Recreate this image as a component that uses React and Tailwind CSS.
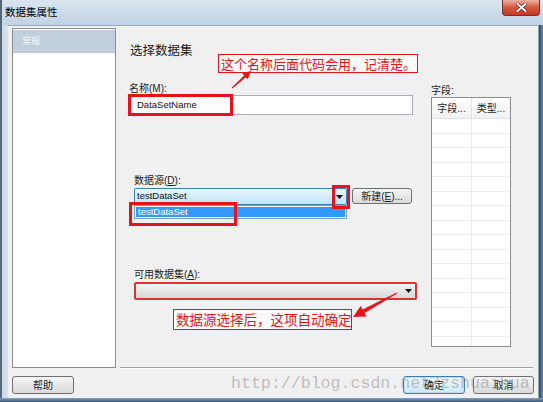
const rows = Array.from({ length: 16 })

function Arrow({ className = '' }) {
  return (
    <svg width="7" height="4" viewBox="0 0 7 4" className={className}>
      <path d="M0 0h7L3.5 4z" fill="#111" />
    </svg>
  )
}

export default function App() {
  return (
    <div className="relative w-[543px] h-[402px] overflow-hidden bg-[#c3d4e6] font-['Liberation_Sans','Noto_Sans_CJK_SC',sans-serif] text-[#1e1e1e]">
      {/* Title bar */}
      <div className="h-[25px] flex items-start justify-between bg-gradient-to-b from-[#d9e4ef] to-[#c0d2e5] border-l-2 border-[#56677a]">
        <span className="pl-[3px] pt-[6px] text-[10.5px] leading-[13px] text-black">数据集属性</span>
        <div className="mr-[3px] w-[38px] h-[16px] rounded-b-[4px] bg-gradient-to-b from-[#eab0a2] via-[#d4573f] to-[#c13a22] border border-t-0 border-[#7b3025] flex items-center justify-center">
          <svg width="11" height="9" viewBox="0 0 11 9">
            <path d="M1.5 1l8 7M9.5 1l-8 7" stroke="#5a1d14" strokeWidth="3.4" strokeLinecap="round" />
            <path d="M1.5 1l8 7M9.5 1l-8 7" stroke="#fff" strokeWidth="2" strokeLinecap="round" />
          </svg>
        </div>
      </div>

      {/* Body */}
      <div className="flex h-[373px]">
        <div className="w-[8px] bg-gradient-to-r from-[#cbd9e8] to-[#d5e1ee] border-l-2 border-[#56677a]" />

        <div className="w-[530px] bg-[#f0f0f0] border-t border-[#97a8ba] flex flex-col">
          <div className="flex h-[342px]">
            {/* Left nav */}
            <div className="ml-[4px] mt-[2px] w-[104px] h-[340px] border border-[#8d8d8d] bg-white">
              <div className="mt-px h-[23px] bg-[#c1cfdc] pl-[9px] flex items-center text-[9px] text-[#f4f7fa]">常规</div>
            </div>

            {/* Right content */}
            <div className="ml-[4px] w-[413px] h-[342px] border-b border-[#a0a0a0] shadow-[0_1px_0_#ffffff] pl-[9px]">
              <div className="mt-[16px] ml-px text-[12.5px] leading-[18px] text-[#1a1a1a]">选择数据集</div>

              <div className="flex">
                {/* Form */}
                <div className="w-[302px] flex flex-col">
                  <div className="mt-[22px] text-[10px] leading-[13px]">名称(M):</div>
                  <div className="w-[284px] h-[20px] border border-[#abadb3] bg-white pl-[7px] flex items-center text-[9.5px] text-[#111]">
                    DataSetName
                  </div>

                  <div className="mt-[59px] ml-[5px] text-[10px] leading-[13px]">数据源(<span className="underline">D</span>):</div>
                  <div className="mt-px ml-[5px] flex items-start">
                    <div className="w-[213px] h-[17px] border border-[#3c7fb1] rounded-[2px] bg-gradient-to-b from-[#eaf6fd] to-[#bfe4f8] flex">
                      <div className="flex-1 pl-[2px] flex items-center text-[9.5px] text-[#111]">testDataSet</div>
                      <div className="w-[14px] border-l border-[#7fb0d4] flex items-center justify-center">
                        <Arrow />
                      </div>
                    </div>
                    <div className="ml-[5px] w-[60px] h-[16px] border border-[#707070] rounded-[3px] bg-gradient-to-b from-[#f4f4f4] to-[#dadada] flex items-center justify-center text-[10px]">
                      新建(<span className="underline">E</span>)...
                    </div>
                  </div>

                  <div className="mt-[63px] ml-[5px] text-[10px] leading-[13px]">可用数据集(<span className="underline">A</span>):</div>
                  <div className="mt-px ml-[5px] w-[283px] h-[18px] border-2 border-[#d9343a] rounded-[2px] bg-gradient-to-b from-[#f3f3f3] to-[#d8d8d8] flex items-center justify-end pr-[3px]">
                    <Arrow />
                  </div>
                </div>

                {/* Fields */}
                <div className="flex flex-col">
                  <div className="mt-[25px] text-[10px] leading-[12px]">字段:</div>
                  <div className="w-[80px] h-[250px] border border-[#8d8d8d] bg-white overflow-hidden">
                    <div className="h-[21px] flex border-b border-[#e3e3e3] bg-gradient-to-b from-white to-[#f1f1f1] text-[10px]">
                      <div className="w-[40px] border-r border-[#e3e3e3] flex items-center justify-center">字段...</div>
                      <div className="flex-1 flex items-center justify-center">类型...</div>
                    </div>
                    {rows.map((_, i) => (
                      <div key={i} className="h-[14.5px] flex border-b border-[#ececec]">
                        <div className="w-[40px] border-r border-[#ececec]" />
                      </div>
                    ))}
                  </div>
                </div>
              </div>
            </div>
          </div>

          {/* Buttons */}
          <div className="mt-[8px] px-[4px] flex justify-between text-[10px]">
            <div className="w-[62px] h-[18px] border border-[#707070] rounded-[3px] bg-gradient-to-b from-[#f4f4f4] to-[#dadada] flex items-center justify-center">帮助</div>
            <div className="flex gap-[8px]">
              <div className="w-[62px] h-[18px] border border-[#3c7fb1] rounded-[3px] bg-gradient-to-b from-[#eef7fd] to-[#cfe8f8] shadow-[inset_0_0_0_1px_#b7dcf5] flex items-center justify-center">确定</div>
              <div className="w-[61px] h-[18px] border border-[#707070] rounded-[3px] bg-gradient-to-b from-[#f4f4f4] to-[#dadada] flex items-center justify-center">取消</div>
            </div>
          </div>
        </div>

        <div className="w-[5px] bg-gradient-to-r from-[#2b4565] to-[#6f8fb3] border-l border-[#8ea2b8]" />
      </div>

      {/* Bottom frame */}
      <div className="h-[4px] bg-gradient-to-b from-[#8aa3bf] to-[#3a5576]" />

      {/* Dropdown list (open) */}
      <div className="absolute left-[134px] top-[205px] w-[213px] h-[14px] border border-[#7c9cbf] bg-white p-px">
        <div className="h-full bg-[#3399ff] text-white text-[9.5px] leading-[10px] pl-[2px]">testDataSet</div>
      </div>

      {/* Annotations */}
      <div className="absolute left-[218px] top-[54px] w-[200px] h-[19px] border border-[#e5141c] bg-[#fbfbfb] pl-[2px] text-[13px] leading-[17px] text-[#e5141c] whitespace-nowrap font-['Noto_Sans_CJK_SC',sans-serif]">
        这个名称后面代码会用，记清楚。
      </div>
      <div className="absolute left-[128px] top-[94px] w-[105px] h-[22px] border-[3px] border-[#e5141c]" />
      <div className="absolute left-[332px] top-[185px] w-[18px] h-[24px] border-[3px] border-[#e5141c]" />
      <div className="absolute left-[129px] top-[202px] w-[108px] h-[24px] border-[3px] border-[#e5141c]" />
      <div className="absolute left-[173px] top-[309px] w-[179px] h-[21px] border border-[#e5141c] bg-[#fbfbfb] pl-[2px] text-[13.5px] leading-[19px] text-[#e5141c] whitespace-nowrap font-['Noto_Sans_CJK_SC',sans-serif]">
        数据源选择后，这项自动确定
      </div>

      <svg className="absolute left-0 top-0 pointer-events-none" width="543" height="402">
        <polygon points="251,71 247.7,79.3 245.8,77.2 232.3,88.4 231.7,87.6 244.2,75.4 242.3,73.3" fill="#e5141c" />
        <polygon points="353,317 366.5,316.5 364.6,313 397.2,293.4 396.8,292.6 362.6,309.4 360.7,305.9" fill="#e5141c" />
      </svg>

      {/* Watermark */}
      <div className="absolute left-[231px] top-[375px] text-[16.6px] leading-[18px] text-[#8a8a8a]/50 font-['Liberation_Mono',monospace] whitespace-nowrap pointer-events-none">
        http://blog.csdn.net/zshuaihua
      </div>
    </div>
  )
}
